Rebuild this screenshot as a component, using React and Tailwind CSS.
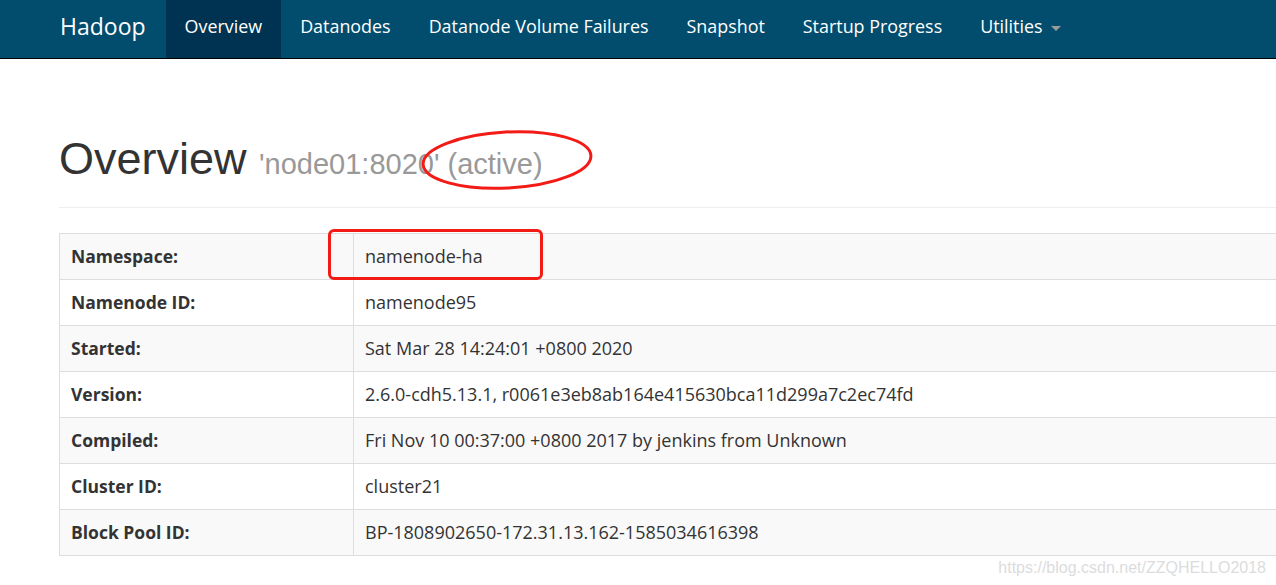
import React from 'react'

const navItems = ['Overview', 'Datanodes', 'Datanode Volume Failures', 'Snapshot', 'Startup Progress']

const rows = [
    ['Namespace:', 'namenode-ha'],
    ['Namenode ID:', 'namenode95'],
    ['Started:', 'Sat Mar 28 14:24:01 +0800 2020'],
    ['Version:', '2.6.0-cdh5.13.1, r0061e3eb8ab164e415630bca11d299a7c2ec74fd'],
    ['Compiled:', 'Fri Nov 10 00:37:00 +0800 2017 by jenkins from Unknown'],
    ['Cluster ID:', 'cluster21'],
    ['Block Pool ID:', 'BP-1808902650-172.31.13.162-1585034616398'],
]

const App = () => {
    return (
        <div className="relative w-[1276px] h-[585px] overflow-hidden bg-white" style={{ fontFamily: '"Open Sans", sans-serif' }}>
            {/* top navbar */}
            <nav className="flex h-[59px] items-stretch bg-[#024d6e] border-b border-black pl-[60px]">
                <div className="flex items-center pb-[5px] pr-[20px] text-[23px] text-white">Hadoop</div>
                {navItems.map((item, i) => (
                    <div
                        key={item}
                        className={`flex items-center pb-[5px] px-[19px] text-[17.9px] text-white ${i === 0 ? 'bg-[#003352]' : ''}`}
                    >
                        {item}
                    </div>
                ))}
                <div className="flex items-center pb-[5px] px-[19px] text-[17.9px] text-white">
                    Utilities
                    <span className="ml-[8px] mt-[3px] border-x-[5px] border-x-transparent border-t-[5px] border-t-[#9a9a9a]"></span>
                </div>
            </nav>

            <div className="pl-[59px]">
                {/* page header */}
                <div className="mt-[75px] mb-[25px] pb-[11px] border-b border-[#eee] w-[1462px]">
                    <h1 className="text-[45px] leading-[1.1] text-[#333] mb-[12px]" style={{ fontFamily: '"Liberation Sans", Arial, sans-serif' }}>
                        Overview <span className="text-[29px] text-[#999]">'node01:8020' (active)</span>
                    </h1>
                </div>

                <table className="w-[1462px] border-collapse border border-[#ddd] text-[17.5px] text-[#333]">
                    <tbody>
                        {rows.map(([k, v], i) => (
                            <tr key={k} className={i % 2 === 0 ? 'bg-[#f9f9f9]' : 'bg-white'}>
                                <th className="w-[294px] h-[46px] border border-[#ddd] px-[11px] text-left font-bold">{k}</th>
                                <td className="h-[46px] border border-[#ddd] px-[11px] text-[18px]">{v}</td>
                            </tr>
                        ))}
                    </tbody>
                </table>
            </div>

            {/* red annotations */}
            <svg className="absolute left-[418px] top-[126px]" width="180" height="68" viewBox="0 0 180 68">
                <ellipse cx="89" cy="34" rx="84" ry="28" fill="none" stroke="#f21b16" strokeWidth="3" transform="rotate(-3 89 34)" />
            </svg>
            <div className="absolute left-[328px] top-[229px] w-[215px] h-[51px] border-[3px] border-[#f21b16] rounded-[6px]"></div>

            <div className="absolute right-[10px] bottom-[5px] text-[16px] text-[#dcdcdc]" style={{ fontFamily: '"Liberation Sans", Arial, sans-serif' }}>
                https://blog.csdn.net/ZZQHELLO2018
            </div>
        </div>
    )
}

export default App
